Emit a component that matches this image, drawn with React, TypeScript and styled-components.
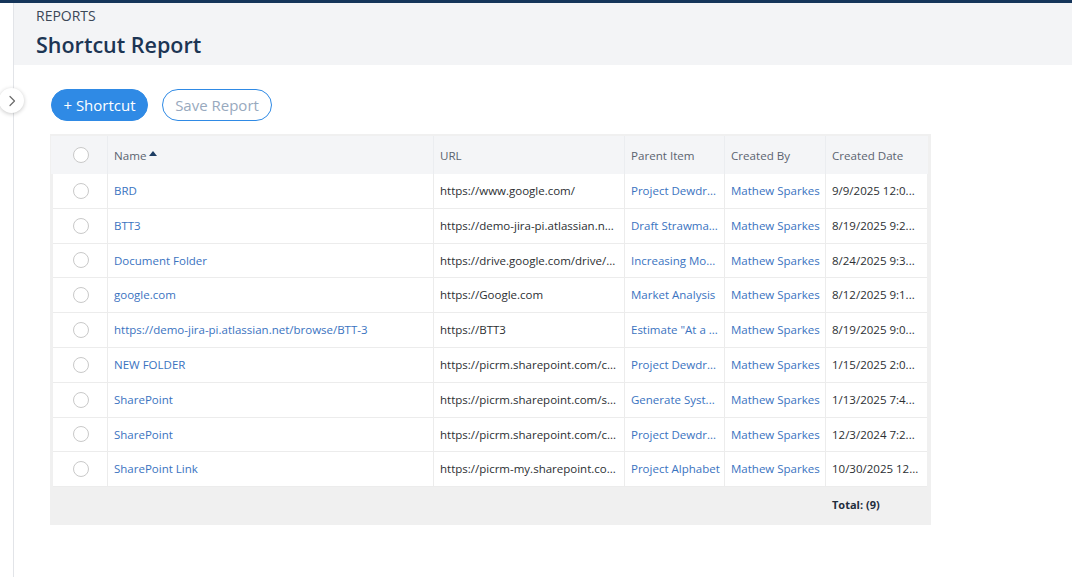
import React from 'react';
import styled, {createGlobalStyle} from 'styled-components';

const GlobalStyle = createGlobalStyle`
  html, body {
    margin: 0;
    padding: 0;
    background: #ffffff;
    font-family: "Open Sans", "Noto Sans", Arial, sans-serif;
  }
  * { box-sizing: border-box; }
`

type Row = {
    name: string
    url: string
    parent: string
    createdBy: string
    date: string
}

const rows: Row[] = [
    {name: 'BRD', url: 'https://www.google.com/', parent: 'Project Dewdr...', createdBy: 'Mathew Sparkes', date: '9/9/2025 12:0...'},
    {name: 'BTT3', url: 'https://demo-jira-pi.atlassian.n...', parent: 'Draft Strawma...', createdBy: 'Mathew Sparkes', date: '8/19/2025 9:2...'},
    {name: 'Document Folder', url: 'https://drive.google.com/drive/...', parent: 'Increasing Mo...', createdBy: 'Mathew Sparkes', date: '8/24/2025 9:3...'},
    {name: 'google.com', url: 'https://Google.com', parent: 'Market Analysis', createdBy: 'Mathew Sparkes', date: '8/12/2025 9:1...'},
    {name: 'https://demo-jira-pi.atlassian.net/browse/BTT-3', url: 'https://BTT3', parent: 'Estimate "At a ...', createdBy: 'Mathew Sparkes', date: '8/19/2025 9:0...'},
    {name: 'NEW FOLDER', url: 'https://picrm.sharepoint.com/c...', parent: 'Project Dewdr...', createdBy: 'Mathew Sparkes', date: '1/15/2025 2:0...'},
    {name: 'SharePoint', url: 'https://picrm.sharepoint.com/s...', parent: 'Generate Syst...', createdBy: 'Mathew Sparkes', date: '1/13/2025 7:4...'},
    {name: 'SharePoint', url: 'https://picrm.sharepoint.com/c...', parent: 'Project Dewdr...', createdBy: 'Mathew Sparkes', date: '12/3/2024 7:2...'},
    {name: 'SharePoint Link', url: 'https://picrm-my.sharepoint.co...', parent: 'Project Alphabet', createdBy: 'Mathew Sparkes', date: '10/30/2025 12...'},
]

const COLS = '55px 326px 191px 100px 101px 101px'

export default function App() {
    return (
        <Page>
            <GlobalStyle/>
            <TopBar/>
            <Body>
                <SideStrip>
                    <Toggle>
                        <svg width="12" height="12" viewBox="0 0 12 12" fill="none">
                            <path d="M4 1.5 L8.5 6 L4 10.5" stroke="#6b6b6b" strokeWidth="1.2" strokeLinecap="round" strokeLinejoin="round"/>
                        </svg>
                    </Toggle>
                </SideStrip>
                <Main>
                    <Header>
                        <Crumb>REPORTS</Crumb>
                        <Title>Shortcut Report</Title>
                    </Header>
                    <Content>
                        <Toolbar>
                            <Button $primary>+ Shortcut</Button>
                            <Button>Save Report</Button>
                        </Toolbar>
                        <Table>
                            <HeadRow>
                                <CheckCell><Radio/></CheckCell>
                                <HeadCell>
                                    Name
                                    <SortArrow viewBox="0 0 8 5"><path d="M0 5 L4 0 L8 5 Z" fill="#1d3d63"/></SortArrow>
                                </HeadCell>
                                <HeadCell>URL</HeadCell>
                                <HeadCell>Parent Item</HeadCell>
                                <HeadCell>Created By</HeadCell>
                                <HeadCell>Created Date</HeadCell>
                            </HeadRow>
                            {rows.map((r, i) => (
                                <DataRow key={i}>
                                    <CheckCell $body><Radio/></CheckCell>
                                    <Cell $link>{r.name}</Cell>
                                    <Cell>{r.url}</Cell>
                                    <Cell $link>{r.parent}</Cell>
                                    <Cell $link>{r.createdBy}</Cell>
                                    <Cell>{r.date}</Cell>
                                </DataRow>
                            ))}
                            <Footer>
                                <Total>Total: (9)</Total>
                            </Footer>
                        </Table>
                    </Content>
                </Main>
            </Body>
        </Page>
    )
}

const Page = styled.div`
  width: 1072px;
  height: 577px;
  overflow: hidden;
  background: #fff;
`

const TopBar = styled.div`
  height: 3px;
  background: #15355a;
`

const Body = styled.div`
  display: flex;
  height: 574px;
`

const SideStrip = styled.div`
  position: relative;
  width: 14px;
  flex-shrink: 0;
  border-right: 1px solid #e2e4e8;
  background: #fff;
`

const Toggle = styled.div`
  position: absolute;
  left: -1px;
  top: 85px;
  width: 25px;
  height: 25px;
  border-radius: 50%;
  background: #fff;
  box-shadow: 0 1px 4px rgba(0, 0, 0, 0.22);
  display: flex;
  align-items: center;
  justify-content: center;
  z-index: 2;
`

const Main = styled.div`
  flex: 1;
  display: flex;
  flex-direction: column;
`

const Header = styled.div`
  height: 62px;
  background: #f3f4f6;
  padding: 4px 0 0 22px;
`

const Crumb = styled.div`
  font-size: 14px;
  line-height: 18px;
  color: #3b4756;
`

const Title = styled.h1`
  margin: 6px 0 0;
  font-size: 21.5px;
  line-height: 28px;
  font-weight: 600;
  color: #1c3554;
`

const Content = styled.div`
  padding: 24px 0 0 36px;
`

const Toolbar = styled.div`
  display: flex;
  gap: 14px;
  margin-left: 1px;
`

const Button = styled.button<{ $primary?: boolean }>`
  height: 32px;
  padding: 0 11px;
  border-radius: 16px;
  font-family: "Open Sans", Arial, sans-serif;
  font-size: 15px;
  border: 1.5px solid #2f8ae5;
  background: ${p => p.$primary ? '#2f8ae5' : '#fff'};
  color: ${p => p.$primary ? '#fff' : '#98a9be'};
  width: ${p => p.$primary ? '97px' : '110px'};
  cursor: pointer;
`

const Table = styled.div`
  margin-top: 13px;
  width: 881px;
  background: #f0f0f0;
  padding: 2px 4px 0 3px;
`

const HeadRow = styled.div`
  display: grid;
  grid-template-columns: ${COLS};
  height: 38px;
  background: #f4f5f7;
  margin: 0 -1px 0 -2px;
  padding: 0 1px 0 2px;
`

const DataRow = styled.div`
  display: grid;
  grid-template-columns: ${COLS};
  height: 34.8px;
  background: #fff;
  border-bottom: 1px solid #ececec;
`

const CheckCell = styled.div<{ $body?: boolean }>`
  display: flex;
  align-items: center;
  justify-content: center;
  border-right: 1px solid ${p => p.$body ? '#ececec' : '#ebedf0'};
`

const Radio = styled.span`
  width: 16px;
  height: 16px;
  border-radius: 50%;
  border: 1px solid #c9c9c9;
  background: #fff;
  margin-left: 2px;
`

const HeadCell = styled.div`
  display: flex;
  align-items: center;
  padding-left: 6px;
  padding-top: 1px;
  font-size: 11.6px;
  color: #5b6470;
  border-right: 1px solid #ebedf0;
  &:last-child { border-right: none; }
`

const SortArrow = styled.svg`
  width: 8px;
  height: 5px;
  margin-left: 3px;
  margin-top: -4px;
`

const Cell = styled.div<{ $link?: boolean }>`
  padding: 0 1px 0 6px;
  line-height: 33.8px;
  font-size: 11.5px;
  white-space: nowrap;
  overflow: hidden;
  text-overflow: ellipsis;
  color: ${p => p.$link ? '#3a73bf' : '#2c2f33'};
  border-right: 1px solid #ececec;
  &:last-child { border-right: none; }
`

const Footer = styled.div`
  display: grid;
  grid-template-columns: ${COLS};
  height: 38px;
  padding-bottom: 3px;
  align-items: center;
`

const Total = styled.div`
  grid-column: 6;
  padding-left: 6px;
  font-size: 11px;
  font-weight: 700;
  color: #1f2d3d;
`
